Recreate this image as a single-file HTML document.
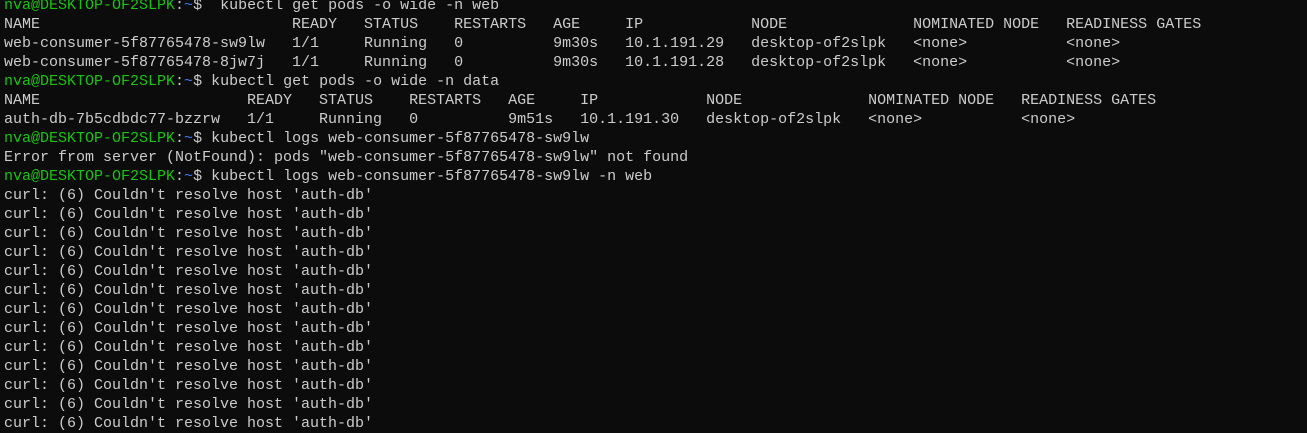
<!DOCTYPE html><html><head><style>
body{margin:0;background:#0c0c0c;width:1307px;height:423px;overflow:hidden}
pre{margin:0;position:absolute;top:-4px;left:4px;font-family:"Liberation Mono",monospace;font-size:15px;line-height:19px;color:#cccccc}
.g{color:#16c60c}.b{color:#3b78ff}
</style></head><body><pre><span class="g">nva@DESKTOP-OF2SLPK</span>:<span class="b">~</span>$  kubectl get pods -o wide -n web
NAME                            READY   STATUS    RESTARTS   AGE     IP            NODE              NOMINATED NODE   READINESS GATES
web-consumer-5f87765478-sw9lw   1/1     Running   0          9m30s   10.1.191.29   desktop-of2slpk   &lt;none&gt;           &lt;none&gt;
web-consumer-5f87765478-8jw7j   1/1     Running   0          9m30s   10.1.191.28   desktop-of2slpk   &lt;none&gt;           &lt;none&gt;
<span class="g">nva@DESKTOP-OF2SLPK</span>:<span class="b">~</span>$ kubectl get pods -o wide -n data
NAME                       READY   STATUS    RESTARTS   AGE     IP            NODE              NOMINATED NODE   READINESS GATES
auth-db-7b5cdbdc77-bzzrw   1/1     Running   0          9m51s   10.1.191.30   desktop-of2slpk   &lt;none&gt;           &lt;none&gt;
<span class="g">nva@DESKTOP-OF2SLPK</span>:<span class="b">~</span>$ kubectl logs web-consumer-5f87765478-sw9lw
Error from server (NotFound): pods "web-consumer-5f87765478-sw9lw" not found
<span class="g">nva@DESKTOP-OF2SLPK</span>:<span class="b">~</span>$ kubectl logs web-consumer-5f87765478-sw9lw -n web
curl: (6) Couldn't resolve host 'auth-db'
curl: (6) Couldn't resolve host 'auth-db'
curl: (6) Couldn't resolve host 'auth-db'
curl: (6) Couldn't resolve host 'auth-db'
curl: (6) Couldn't resolve host 'auth-db'
curl: (6) Couldn't resolve host 'auth-db'
curl: (6) Couldn't resolve host 'auth-db'
curl: (6) Couldn't resolve host 'auth-db'
curl: (6) Couldn't resolve host 'auth-db'
curl: (6) Couldn't resolve host 'auth-db'
curl: (6) Couldn't resolve host 'auth-db'
curl: (6) Couldn't resolve host 'auth-db'
curl: (6) Couldn't resolve host 'auth-db'
</pre></body></html>
